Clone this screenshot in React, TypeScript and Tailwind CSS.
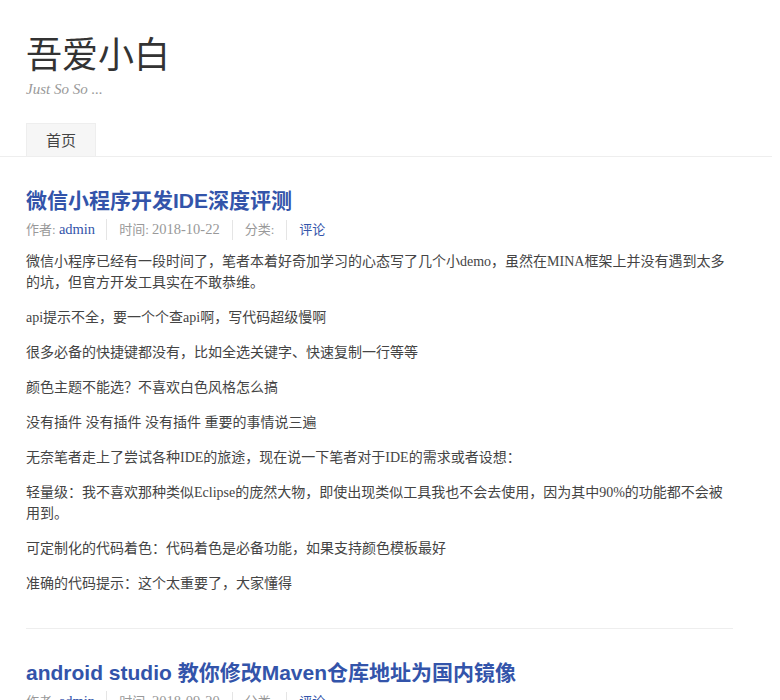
const posts = [
  {
    title: '微信小程序开发IDE深度评测',
    date: '2018-10-22',
    category: '评论',
    body: [
      '微信小程序已经有一段时间了，笔者本着好奇加学习的心态写了几个小demo，虽然在MINA框架上并没有遇到太多的坑，但官方开发工具实在不敢恭维。',
      'api提示不全，要一个个查api啊，写代码超级慢啊',
      '很多必备的快捷键都没有，比如全选关键字、快速复制一行等等',
      '颜色主题不能选？不喜欢白色风格怎么搞',
      '没有插件 没有插件 没有插件 重要的事情说三遍',
      '无奈笔者走上了尝试各种IDE的旅途，现在说一下笔者对于IDE的需求或者设想：',
      '轻量级：我不喜欢那种类似Eclipse的庞然大物，即使出现类似工具我也不会去使用，因为其中90%的功能都不会被用到。',
      '可定制化的代码着色：代码着色是必备功能，如果支持颜色模板最好',
      '准确的代码提示：这个太重要了，大家懂得',
    ],
  },
  {
    title: 'android studio 教你修改Maven仓库地址为国内镜像',
    date: '2018-09-20',
    category: '评论',
    body: [],
  },
];

const serif = "font-['Liberation_Serif','Noto_Sans_CJK_SC',serif]";

// latin bits in the meta line are a touch bigger so they take Georgia-like widths
function Meta({ date, category }: { date: string; category: string }) {
  return (
    <ul className={`flex items-center text-[13px] leading-[20px] text-[#999] ${serif}`}>
      <li className="pr-[11px]">
        作者: <a className="text-[14.5px] text-[#3354aa]">admin</a>
      </li>
      <li className="border-l border-[#e5e5e5] px-[12px]">
        时间: <span className="text-[14.5px]">{date}</span>
      </li>
      <li className="border-l border-[#e5e5e5] px-[12px]">分类:</li>
      <li className="border-l border-[#e5e5e5] pl-[12px]">
        <a className="text-[#3354aa]">{category}</a>
      </li>
    </ul>
  );
}

export default function App() {
  return (
    <div className={`min-h-[700px] bg-white text-[#444] ${serif}`}>
      <header className="w-[772px] border-b border-[#eee] pl-[26px]">
        <div className="pt-[31px] font-['Noto_Sans_CJK_SC',sans-serif] text-[36px] leading-[43px] text-[#333]">
          吾爱小白
        </div>
        <div className="mt-[5px] text-[15px] italic leading-[20px] text-[#999]">Just So So ...</div>
        <nav className="mt-[24px] flex">
          <a className="block h-[33px] w-[70px] border border-b-0 border-[#eee] bg-[#f6f6f6] text-center font-['Noto_Sans_CJK_SC',sans-serif] text-[15px] leading-[32px] text-[#444]">
            首页
          </a>
        </nav>
      </header>

      <main className="ml-[26px] w-[707px]">
        {posts.map((p, i) => (
          <article key={i} className="border-b border-[#eee] pt-[31px] pb-[20px]">
            <h2 className="font-['Liberation_Sans','Noto_Sans_CJK_SC',sans-serif] text-[21px] font-bold leading-[25px] text-[#3354aa]">
              {p.title}
            </h2>
            <div className="mt-[6px]">
              <Meta date={p.date} category={p.category} />
            </div>
            <div className="mt-[11px] text-[14px] leading-[21px]">
              {p.body.map((t, j) => (
                <p key={j} className="mb-[14px]">
                  {t}
                </p>
              ))}
            </div>
          </article>
        ))}
      </main>
    </div>
  );
}
